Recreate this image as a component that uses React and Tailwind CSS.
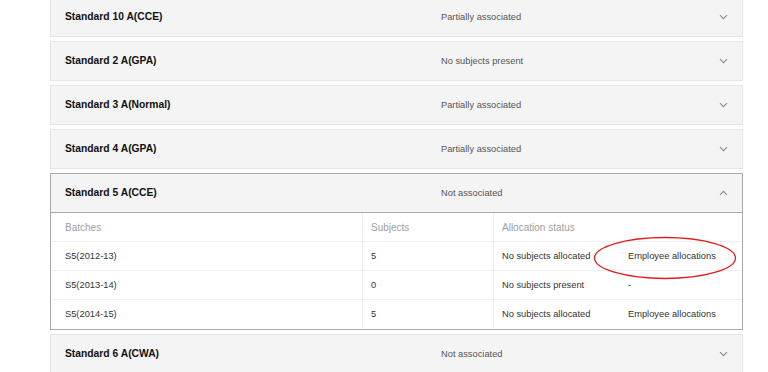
import React from 'react';

const STANDARDS = [
  { name: 'Standard 10 A(CCE)', status: 'Partially associated' },
  { name: 'Standard 2 A(GPA)', status: 'No subjects present' },
  { name: 'Standard 3 A(Normal)', status: 'Partially associated' },
  { name: 'Standard 4 A(GPA)', status: 'Partially associated' },
  { name: 'Standard 5 A(CCE)', status: 'Not associated', open: true },
  { name: 'Standard 6 A(CWA)', status: 'Not associated' },
];

const BATCHES = [
  { name: 'S5(2012-13)', subjects: 5, status: 'No subjects allocated', link: 'Employee allocations', mark: true },
  { name: 'S5(2013-14)', subjects: 0, status: 'No subjects present', link: '-' },
  { name: 'S5(2014-15)', subjects: 5, status: 'No subjects allocated', link: 'Employee allocations' },
];

function Chevron({ up }) {
  return (
    <svg width="9" height="6" viewBox="0 0 9 6" className="text-[#8a8a8a]">
      <path
        d={up ? 'M1 4.8 L4.5 1.3 L8 4.8' : 'M1 1.2 L4.5 4.7 L8 1.2'}
        fill="none"
        stroke="currentColor"
        strokeWidth="1.1"
      />
    </svg>
  );
}

function BatchTable() {
  return (
    <div className="bg-white text-[9.3px]">
      <div className="grid grid-cols-[311px_131px_127px_1fr] h-[29px] border-b border-[#efefef] text-[#a0a0a0] text-[10px]">
        <div className="flex items-center pl-[14px] pt-[1px]">Batches</div>
        <div className="flex items-center pl-[8px] pt-[1px] border-l border-[#efefef]">Subjects</div>
        <div className="col-span-2 flex items-center pl-[8px] pt-[1px] border-l border-[#efefef]">Allocation status</div>
      </div>
      {BATCHES.map((b, i) => (
        <div
          key={b.name}
          className={`grid grid-cols-[311px_131px_127px_1fr] h-[29px] text-[#333] ${
            i < BATCHES.length - 1 ? 'border-b border-[#efefef]' : ''
          }`}
        >
          <div className="flex items-center pl-[14px] pt-[1px]">{b.name}</div>
          <div className="flex items-center pl-[8px] pt-[1px] border-l border-[#efefef]">{b.subjects}</div>
          <div className="flex items-center pl-[8px] pt-[1px] border-l border-[#efefef]">{b.status}</div>
          <div className="relative flex items-center pl-[8px] pt-[1px]">
            {b.link}
            {b.mark && (
              <svg
                width="146"
                height="46"
                viewBox="0 0 146 46"
                className="absolute left-[-28px] top-[-7px] pointer-events-none"
              >
                <ellipse cx="73" cy="23" rx="70.5" ry="20.5" fill="none" stroke="#e21b1b" strokeWidth="1.3" />
              </svg>
            )}
          </div>
        </div>
      ))}
    </div>
  );
}

export default function App() {
  return (
    <div className="w-[768px] h-[372px] overflow-hidden bg-white" style={{ fontFamily: '"Liberation Sans", Arial, sans-serif' }}>
      <div className="mt-[-3px] ml-[50px] w-[693px] flex flex-col gap-[4px]">
        {STANDARDS.map((s) => (
          <div
            key={s.name}
            className={`border ${s.open ? 'border-[#a9a9a9]' : 'border-[#e6e6e6]'}`}
          >
            <div
              className={`flex items-center h-[38px] bg-[#f4f4f4] ${
                s.open ? 'border-b border-[#a9a9a9] h-[39px]' : ''
              }`}
            >
              <div className="w-[390px] pl-[14px] text-[10.3px] font-bold text-[#111]">{s.name}</div>
              <div className="flex-1 pt-[1px] text-[9.3px] text-[#555]">{s.status}</div>
              <div className="pr-[14px]">
                <Chevron up={s.open} />
              </div>
            </div>
            {s.open && <BatchTable />}
          </div>
        ))}
      </div>
    </div>
  );
}
